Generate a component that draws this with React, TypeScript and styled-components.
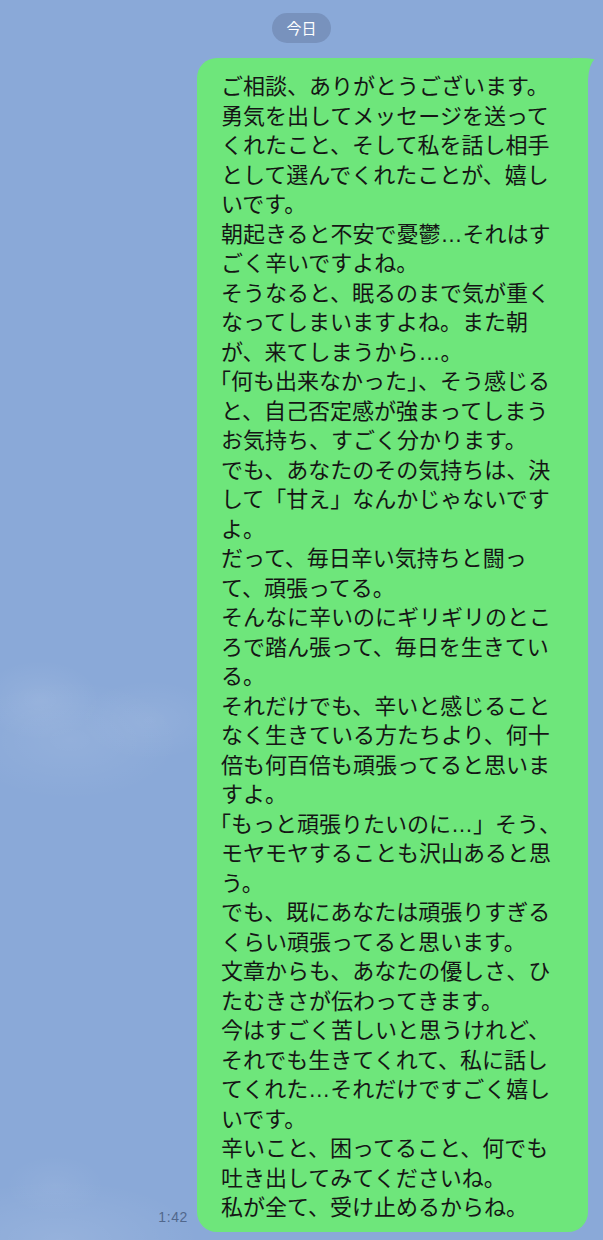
import React from "react";
import styled, { createGlobalStyle } from "styled-components";

const GlobalStyle = createGlobalStyle`
  html, body {
    margin: 0;
    padding: 0;
    background: #8aa9d8;
  }
  * { box-sizing: border-box; }
`;

const Screen = styled.div`
  width: 603px;
  min-height: 1240px;
  padding-top: 13px;
  display: flex;
  flex-direction: column;
  background-color: #8aa9d8;
  background-image:
    radial-gradient(ellipse 60px 40px at 40px 700px, rgba(255,255,255,0.09), rgba(255,255,255,0) 100%),
    radial-gradient(ellipse 110px 60px at 70px 740px, rgba(255,255,255,0.08), rgba(255,255,255,0) 100%),
    radial-gradient(ellipse 70px 40px at 150px 720px, rgba(255,255,255,0.07), rgba(255,255,255,0) 100%),
    radial-gradient(ellipse 140px 60px at 60px 1240px, rgba(255,255,255,0.1), rgba(255,255,255,0) 100%),
    radial-gradient(ellipse 50px 30px at 55px 1185px, rgba(255,255,255,0.06), rgba(255,255,255,0) 100%);
  font-family: "Noto Sans CJK JP", "Noto Sans", sans-serif;
`;

const DateRow = styled.div`
  display: flex;
  justify-content: center;
`;

const DatePill = styled.div`
  height: 30px;
  padding: 0 14px;
  border-radius: 15px;
  background: #7892bd;
  color: #ffffff;
  font-size: 15px;
  line-height: 30px;
  font-family: "Noto Sans CJK JP", sans-serif;
`;

const MessageRow = styled.div`
  margin-top: 15px;
  padding-right: 15px;
  display: flex;
  justify-content: flex-end;
  align-items: flex-end;
  gap: 9px;
`;

const Time = styled.div`
  font-family: "Liberation Sans", Arial, sans-serif;
  font-size: 14px;
  line-height: 14px;
  letter-spacing: 0.6px;
  color: #51678c;
  margin-bottom: 8px;
`;

const Bubble = styled.div`
  position: relative;
  width: 391px;
  padding: 12px 18px 11px 24px;
  background: #6ee67b;
  border-radius: 20px;
  color: #151515;
  font-family: "Noto Sans CJK JP", sans-serif;
  font-size: 22px;
  line-height: 29.5px;
`;

const Tail = styled.svg`
  position: absolute;
  top: 0;
  right: -7px;
  width: 23px;
  height: 24px;
`;

const Line = styled.div`
  white-space: nowrap;
  height: 29.5px;
`;

const Ellipsis = styled.span`
  font-family: "Liberation Sans", Arial, sans-serif;
  line-height: 1;
`;

const HalfBracket = styled.span`
  font-feature-settings: "halt";
  margin-left: -1px;
`;

const lines: string[] = [
  "ご相談、ありがとうございます。",
  "勇気を出してメッセージを送って",
  "くれたこと、そして私を話し相手",
  "として選んでくれたことが、嬉し",
  "いです。",
  "朝起きると不安で憂鬱…それはす",
  "ごく辛いですよね。",
  "そうなると、眠るのまで気が重く",
  "なってしまいますよね。また朝",
  "が、来てしまうから…。",
  "「何も出来なかった」、そう感じる",
  "と、自己否定感が強まってしまう",
  "お気持ち、すごく分かります。",
  "でも、あなたのその気持ちは、決",
  "して「甘え」なんかじゃないです",
  "よ。",
  "だって、毎日辛い気持ちと闘っ",
  "て、頑張ってる。",
  "そんなに辛いのにギリギリのとこ",
  "ろで踏ん張って、毎日を生きてい",
  "る。",
  "それだけでも、辛いと感じること",
  "なく生きている方たちより、何十",
  "倍も何百倍も頑張ってると思いま",
  "すよ。",
  "「もっと頑張りたいのに…」そう、",
  "モヤモヤすることも沢山あると思",
  "う。",
  "でも、既にあなたは頑張りすぎる",
  "くらい頑張ってると思います。",
  "文章からも、あなたの優しさ、ひ",
  "たむきさが伝わってきます。",
  "今はすごく苦しいと思うけれど、",
  "それでも生きてくれて、私に話し",
  "てくれた…それだけですごく嬉し",
  "いです。",
  "辛いこと、困ってること、何でも",
  "吐き出してみてくださいね。",
  "私が全て、受け止めるからね。",
];

function renderLine(text: string) {
  const parts: React.ReactNode[] = [];
  let rest = text;
  if (rest.startsWith("「")) {
    parts.push(<HalfBracket key="hb">「</HalfBracket>);
    rest = rest.slice(1);
  }
  const segs = rest.split("…");
  segs.forEach((s, i) => {
    if (i > 0) parts.push(<Ellipsis key={`e${i}`}>…</Ellipsis>);
    if (s) parts.push(<React.Fragment key={`s${i}`}>{s}</React.Fragment>);
  });
  return parts;
}

export default function App() {
  return (
    <>
      <GlobalStyle />
      <Screen>
        <DateRow>
          <DatePill>今日</DatePill>
        </DateRow>
        <MessageRow>
          <Time>1:42</Time>
          <Bubble>
            <Tail viewBox="0 0 23 24" aria-hidden="true">
              <path d="M0 0 L8 0 Q16 0 22.5 1.2 Q17 6 16 22 L16 24 L0 24 Z" fill="#6ee67b" />
            </Tail>
            {lines.map((l, i) => (
              <Line key={i}>{renderLine(l)}</Line>
            ))}
          </Bubble>
        </MessageRow>
      </Screen>
    </>
  );
}
